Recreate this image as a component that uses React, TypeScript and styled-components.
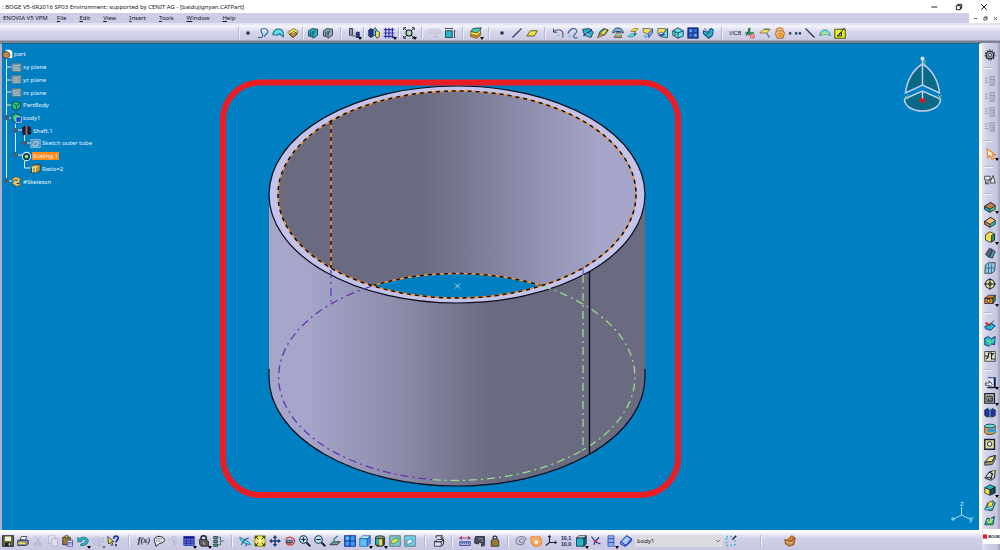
import React from "react";
import styled, { createGlobalStyle } from "styled-components";

const GlobalStyle = createGlobalStyle`
  * { box-sizing: border-box; }
  body { margin: 0; font-family: "Noto Sans", "Open Sans", sans-serif; font-size: 6px; color: #15152a; }
  button, select { font: inherit; color: inherit; border: 0; background: none; padding: 0; margin: 0; }
  svg { display: block; }
`;

const Page = styled.div`
  display: flex;
  flex-direction: column;
  min-height: 100vh;
  background: #cdcde6;
`;

const TitleBar = styled.header`
  display: flex;
  justify-content: space-between;
  align-items: center;
  height: 13px;
  padding: 0 12px 0 2px;
  background: #fff;
`;

const Title = styled.h1`
  margin: 0;
  font-size: 6px;
  line-height: 12px;
  font-weight: 400;
  white-space: nowrap;
`;

const WindowButtons = styled.div<{ $gap: number }>`
  display: flex;
  align-items: center;
  gap: ${(p) => p.$gap}px;
`;

const WindowButton = styled.button<{ $size: number }>`
  width: ${(p) => p.$size}px;
  height: ${(p) => p.$size}px;
  svg { width: 100%; height: 100%; }
`;

const MenuBar = styled.nav`
  display: flex;
  justify-content: space-between;
  height: 10px;
  background: #cdcde6;
`;

const MenuList = styled.div`
  display: flex;
  gap: 13px;
  padding-left: 3px;
`;

const MenuButton = styled.button`
  line-height: 10px;
  white-space: nowrap;
  &:first-child { margin-right: -4px; }
`;

const DocumentButtons = styled.div`
  display: flex;
  align-items: center;
  padding: 0 2px 0 4px;
  background: #fff;
`;

const ToolStrip = styled.div`
  display: flex;
  align-items: center;
  height: 20px;
  padding: 0 0 1px 236px;
  background: linear-gradient(#dedeee 0, #f4f4fb 3px, #d6d6eb 9px, #cacae3 17px, #7e8296 18px, #7e8296 20px);
`;

const BottomStrip = styled.div`
  display: flex;
  align-items: center;
  flex: none;
  height: 20px;
  padding-top: 2px;
  background: linear-gradient(#fff 0, #fff 2px, #e6e6f3 5px, #cfcfe7 9px, #c8c8e2 20px);
`;

const ToolButton = styled.button<{ $faded?: boolean }>`
  position: relative;
  display: flex;
  align-items: center;
  justify-content: center;
  width: 15px;
  height: 15px;
  opacity: ${(p) => (p.$faded ? 0.4 : 1)};
  svg { width: 12px; height: 12px; }
`;

const MenuMark = styled.span`
  position: absolute;
  right: -1px;
  bottom: 0;
  border: 2px solid transparent;
  border-top: 3px solid #000;
  border-bottom: 0;
`;

const Divider = styled.span<{ $width: number; $vertical?: boolean }>`
  flex: none;
  display: flex;
  justify-content: center;
  width: ${(p) => (p.$vertical ? 12 : p.$width)}px;
  height: ${(p) => (p.$vertical ? p.$width : 13)}px;
  align-items: center;
  &::before {
    content: "";
    width: ${(p) => (p.$vertical ? "10px" : "1px")};
    height: ${(p) => (p.$vertical ? "1px" : "12px")};
    background: #b5b5cd;
    box-shadow: ${(p) => (p.$vertical ? "0 1px #f3f3fb" : "1px 0 #f3f3fb")};
  }
`;

const SelectBox = styled.div`
  display: grid;
  align-items: center;
  width: 88px;
  margin-left: 2px;
  svg { grid-area: 1 / 1; justify-self: end; width: 6px; height: 6px; margin-right: 2px; pointer-events: none; }
`;

const BodySelect = styled.select`
  grid-area: 1 / 1;
  appearance: none;
  width: 100%;
  height: 12px;
  padding: 0 2px;
  background: #dcdce0;
`;

const Workspace = styled.main`
  flex: 1;
  display: flex;
`;

const MainColumn = styled.div`
  flex: 1;
  min-width: 0;
  display: flex;
  flex-direction: column;
`;

const Canvas = styled.section`
  flex: 1;
  display: grid;
  grid-template: minmax(0, 1fr) / minmax(0, 1fr);
  background: #0080c2;
  border-left: 2px solid #aeb2c8;
  border-right: 3px solid #fff;
  border-top: 1px solid #0c6d9d;
`;

const Scene = styled.svg`
  grid-area: 1 / 1;
  width: 100%;
  height: 100%;
`;

const Tree = styled.ul`
  grid-area: 1 / 1;
  align-self: start;
  justify-self: start;
  display: grid;
  grid-template-rows: repeat(11, 1fr);
  height: 140px;
  margin: 4px 0 0 0;
  padding: 0;
  list-style: none;
  color: #e8f4ff;
  z-index: 1;
`;

const TreeItem = styled.li<{ $depth: number }>`
  display: flex;
  align-items: center;
  padding-left: ${(p) => [0, 9, 19, 28][p.$depth]}px;
  line-height: 8px;
  white-space: nowrap;
  svg { width: 11px; height: 11px; flex: none; }
`;

const TreeLabel = styled.span<{ $selected?: boolean }>`
  padding: 0 1px;
  background: ${(p) => (p.$selected ? "#ff8a1c" : "transparent")};
`;

const TreeLines = styled.svg`
  grid-area: 1 / 1;
  align-self: start;
  justify-self: start;
  width: 60px;
  height: 150px;
  z-index: 1;
`;

const SideRail = styled.aside`
  flex: none;
  display: flex;
  flex-direction: column;
  width: 18px;
  background: linear-gradient(90deg, #e3e3f1, #cfcfe7 6px, #c6c6e0 15px, #a6a8bd 17px);
`;

const RailTools = styled.div`
  flex: 1;
  display: flex;
  flex-direction: column;
  padding: 4px 2px 0 0;
  ${ToolButton} { flex: 1 1 0; height: auto; min-height: 12px; width: 16px; }
`;

const Brand = styled.div`
  display: flex;
  align-items: center;
  gap: 1px;
  height: 15px;
  margin: 0 0 6px 1px;
  background: #fff;
  font: 900 4px "Liberation Sans", sans-serif;
  svg { width: 5px; height: 5px; }
`;

const K = "#182034";
const T = "#20b8c4";
const C = "#62e0e8";
const Y = "#f4e04a";
const N = "#23369c";
const O = "#e8842a";
const W = "#f4f4fa";
const G = "#25955a";

const box = (front: string, top: string, side: string) => (
  <>
    <path d="M2 6l4-4h8l-4 4z" fill={top} stroke={K} />
    <path d="M2 6h8v8H2z" fill={front} stroke={K} />
    <path d="M10 6l4-4v8l-4 4z" fill={side} stroke={K} />
  </>
);

const slab = (top: string, mid: string, low: string) => (
  <>
    <path d="M1 7l8-5 6 4v5l-7 4-7-4z" fill={low} stroke={K} />
    <path d="M1 7l7 4v4l-7-4z" fill={mid} stroke={K} />
    <path d="M1 7l8-5 6 4-7 5z" fill={top} stroke={K} />
  </>
);

const icons: Record<string, React.ReactNode> = {
  point: <rect x="6" y="6" width="4" height="4" fill="#14285c" />,
  spline: <path d="M1 14c5 1 8-1 6-5S4 2 9 2s7 4 4 7-3 2-3 4" stroke="#2f6f9e" strokeWidth="1.6" />,
  dome: <path d="M1 10C3 1 13 0 15 8v5l-5-4-3 2z" fill={C} stroke="#176c80" strokeWidth="1.4" />,
  patch: <><path d="M1 7l8-5 6 4-7 8z" fill={Y} stroke="#6d5a20" /><path d="M3 10l6-4 5 3-6 5z" fill="#c8901e" stroke={K} /><path d="M6 6l3 2 3-3" stroke={W} /></>,
  bodyTeal: <><path d="M2 5l5-3 7 1v8l-6 4-2-2-4-1z" fill={T} stroke={K} /><path d="M5 6v6M8 5v8M11 5l-3 4" stroke={K} /></>,
  bodyGray: <><path d="M2 5l5-3 7 1v8l-6 4-2-2-4-1z" fill="#8ba9b4" stroke={K} /><path d="M5 6v6M8 5v8M11 5l-3 4" stroke={K} /></>,
  columns: <><path d="M2 2h4v9H2z" fill="#8898bb" stroke={K} /><path d="M6 12h4M11 7h4v7h-4z" fill={N} stroke={K} /><path d="M8 3v8" stroke="#8a8aa8" strokeDasharray="1 1" /></>,
  mirrorBlocks: <><path d="M1 4l3-2 3 2v8l-3 2-3-2z" fill={N} stroke={K} /><path d="M7 3l3-2 1 2v6l-2 3-2-2z" fill={C} stroke={K} /><path d="M10 5h3l2 2v6l-3 2-2-3z" fill={Y} stroke={K} /></>,
  grid: <path d="M1 3.500h14M1 8h14M1 12.500h14M3.500 1v14M8 1v14M12.500 1v14" stroke="#3434b0" strokeWidth="1.6" />,
  snap: <><circle cx="8" cy="8" r="4" fill="#b6dcb0" stroke={K} strokeWidth="1.5" /><path d="M1 4V1h3M12 1h3v3M15 12v3h-3M4 15H1v-3M2 2l3 3M14 2l-3 3M2 14l3-3M14 14l-3-3" stroke={K} strokeWidth="1.3" /></>,
  ghost: <path d="M1 3h14v5h-5v6H7V8H1zM3 5h10" stroke="#707088" strokeDasharray="2 1" />,
  measureBox: <><path d="M2 5h9v9H2z" fill={T} stroke={K} /><path d="M2 2h9M2 1v2M11 1v2M14 5v9M13 5h2M13 14h2" stroke={K} /></>,
  layers: <><path d="M1 6l3-4 11-1-2 4-4 3z" fill="#48c8b8" stroke={K} /><path d="M1 6l8 2 5-4v4l-5 4-8-2z" fill={Y} stroke="#6d5a20" /><path d="M1 10l8 2 5-4v3l-5 4-8-2z" fill={O} stroke="#6d5a20" /></>,
  line: <path d="M2 14L14 2" stroke="#2b3566" strokeWidth="1.5" />,
  plane: <path d="M1 12l5-7h9l-4 7z" fill={Y} stroke="#66601e" strokeWidth="1.3" />,
  arcOpen: <><path d="M14 14C17 5 10 1 2 6" stroke="#4c5d80" strokeWidth="1.5" /><path d="M2 2v5h5" stroke={K} /><path d="M7 11h3" stroke={T} /></>,
  loop: <><path d="M1 9c4-9 11-8 12-4s-5 4-4 8c1 3 5 1 5 1" stroke="#365d9a" strokeWidth="1.5" /><path d="M1 12h5" stroke={T} /></>,
  trim: <><path d="M1 3l9-1 5 5-3 7-6-2-4-4z" fill={T} stroke={K} /><path d="M2 12c4-6 8-3 11-9" stroke={N} strokeWidth="2" /><path d="M5 8l5 4" stroke={W} /></>,
  join: <><path d="M1 14l3-8 5-4 6 2-4 6z" fill={T} stroke={K} /><path d="M4 9l5-5 5-1-4 7z" fill={Y} stroke="#7b6520" /><path d="M2 13l5-3" stroke={O} strokeWidth="2" /></>,
  revolve: <><path d="M1 8c0-9 14-9 14 0l-4-2H5z" fill="#7eb7dc" stroke={K} /><path d="M6 7h5l2 7H3z" fill={O} stroke="#34557a" /><path d="M4 10h8" stroke={C} strokeWidth="2" /></>,
  offset: <><path d="M1 13h7l5-4H6z" fill={C} stroke="#2a8a8a" /><path d="M5 6h6l4-4H9z" fill={Y} stroke="#8a7a2a" /><path d="M10 12l1-7" stroke={K} /></>,
  sweep: <><path d="M1 2h10l3 3-5 5-7-3z" fill={Y} stroke="#4b5978" /><path d="M8 9l6-7v6l-5 6z" fill="#78a8e0" stroke={N} /><path d="M2 11l6 1-3 3z" fill={T} /></>,
  extend: <><path d="M1 2h10v7l-5-2-5 2z" fill={Y} stroke="#4b5978" /><path d="M5 13l9-11v12z" fill={C} stroke={K} /><path d="M2 11l8-1" stroke={N} strokeWidth="2" /></>,
  cubeWire: <><path d="M1 5l7-4 7 4v7l-7 3-7-4z" fill={C} stroke={K} /><path d="M1 5l7 3 7-3M8 8v7M4 7v5" stroke="#175b7a" strokeWidth="1.4" /></>,
  windows: <><path d="M1 1h14v14H1z" fill={N} stroke="#172b68" /><path d="M3 3h4v4H3zM9 9h4v4H9z" fill="#58a8ee" /><path d="M9 3h4v4H9zM3 9h4v4H3z" fill="#2f7ad0" /></>,
  heart: <><path d="M2 5l5 2 5-5 3 2-1 7-5 4-7-6z" fill={T} stroke="#174d8a" strokeWidth="1.4" /><path d="M3 2l3 2M6 10l5-4" stroke={K} /></>,
  exchange: <><path d="M7 1v10M2 8h11" stroke={G} strokeWidth="3" /><path d="M3 12l4-9" stroke={K} /><circle cx="11" cy="12" r="3" fill="#f0b8c0" stroke="#d83a4a" /><path d="M9 10l4 4" stroke="#d83a4a" /></>,
  brush: <><path d="M1 8l5-5h9l-5 5z" fill={Y} stroke="#667048" /><path d="M10 8l4 6M7 3h7" stroke="#4c6c74" strokeWidth="1.600" /></>,
  orangeBox: <><path d="M3 5h9l2 3-2 7H4L2 9z" fill="#efc06a" stroke="#8a5620" /><path d="M3 5c0-5 9-5 9 0M5 9h7M6 12h6" stroke={O} strokeWidth="2" /></>,
  dots: <><rect x="0" y="7" width="3" height="3" fill="#17306a" /><rect x="8" y="7" width="3" height="3" fill="#17306a" /><rect x="13" y="7" width="3" height="3" fill="#17306a" /></>,
  diagonal: <path d="M2 2l12 12" stroke="#2b2b4c" strokeWidth="1.6" />,
  rainbow: <><path d="M1 12C2 1 14 1 15 12c-3-3-11-3-14 0z" fill={C} stroke="#1f8a7a" /><path d="M4 10c3-3 5-3 8 0" stroke={Y} strokeWidth="2" /></>,
  sketchYellow: <><path d="M1 3h14v12H1z" fill="#e8ee28" stroke="#555c14" strokeWidth="1.400" /><path d="M4 12h6V7zM7 10l7-9" stroke={K} strokeWidth="1.3" /></>,
  save: <><path d="M1 1h14v14H1z" fill="#78782a" stroke={K} strokeWidth="1.5" /><path d="M4 2h8v6H4z" fill="#eceee2" /><path d="M4 10h8v5H4z" fill={K} /><path d="M9 11h2v3H9z" fill={W} /></>,
  print: <><path d="M4 6l2-4h7l-2 5z" fill={W} stroke={K} /><path d="M1 7h14v5l-3 2H1z" fill="#8e8e8e" stroke={K} /><path d="M2 11h9" stroke={Y} strokeWidth="2" /></>,
  cut: <path d="M4 1l6 10M12 1L5 11M3 11h3v3H3zM9 11h3v3H9z" stroke="#777790" />,
  copy: <><path d="M2 1h8v10H2z" fill={W} stroke="#777790" /><path d="M6 5h8v10H6z" fill={W} stroke="#777790" /></>,
  paste: <><path d="M1 3h10v10H1z" fill="#a47a28" stroke={K} /><path d="M4 1h4v3H4z" fill={Y} stroke={K} /><path d="M7 7h7v8H7z" fill={W} stroke={N} /><path d="M8 10h5M8 12h5" stroke={N} /></>,
  undo: <path d="M1 3v6h6L5 7c4-2 7-1 6 2-1 2-4 3-6 3v2c5 1 10-2 10-6 0-5-7-7-12-3z" fill={T} stroke="#186c74" />,
  redo: <path d="M15 3v6H9l2-2C7 5 4 6 5 9c1 2 4 3 6 3v2C6 15 1 12 1 8c0-5 7-7 12-3z" stroke="#8686a0" />,
  help: <><path d="M1 2l1 10 2-2 2 4 2-1-2-4h3z" fill={Y} stroke={K} /><path d="M9 5c0-5 6-4 6-1 0 3-3 2-3 6M12 12v3" stroke={N} strokeWidth="2.400" /></>,
  comment: <><path d="M3 11C-1 4 5 1 10 2c7 1 7 9-1 9l-5 4z" fill={W} stroke={K} strokeWidth="1.300" /><path d="M4 5h8M4 8h7" stroke={K} strokeDasharray="2 1" /></>,
  key: <><circle cx="8" cy="5" r="3" stroke="#777790" /><path d="M8 8v6M8 12h3" stroke="#777790" /></>,
  table: <><path d="M1 2h14v12H1z" fill="#5c7ce0" stroke={N} /><path d="M1 2h14v3H1z" fill="#1c1c88" /><path d="M1 8h14M1 11h14M5 5v9M10 5v9" stroke="#1c1c88" /></>,
  lock: <><path d="M4 7V4c0-4 7-4 7 0v3" stroke={K} strokeWidth="2" /><path d="M2 6h10l2 3v6H4l-2-3z" fill="#5c5c54" stroke={K} /><path d="M6 9l3 4" stroke={W} /></>,
  relation: <><path d="M1 2h5v3H1zM1 7h5v3H1zM1 12h5v3H1z" fill="#64a890" stroke={K} /><path d="M7 3h3v10H7M10 8h5" stroke="#4c8474" strokeWidth="1.500" /></>,
  fly: <><path d="M1 3l6 3 7 4 1 3-8-2-5-4z" fill={C} stroke="#1c6c9c" /><path d="M3 13l5-7 5-2M10 12l-1 3" stroke="#1c4c8c" strokeWidth="1.400" /></>,
  fitAll: <><path d="M1 1h14v14H1z" fill={Y} stroke="#7d8a24" /><path d="M2 2l4 4M14 2l-4 4M2 14l4-4M14 14l-4-4M2 5V2h3M11 2h3v3M14 11v3h-3M5 14H2v-3" stroke="#174d2a" strokeWidth="1.300" /><path d="M6 6h4v4H6z" fill={W} /></>,
  pan: <path d="M8 0l3 4H9v3h3V5l4 3-4 3V9H9v3h2l-3 4-3-4h2V9H4v2L0 8l4-3v2h3V4H5z" fill="#243a7c" />,
  rotate: <><path d="M2 6c4-6 13-2 12 3-2 6-10 5-11 1l7 1" stroke="#c0463e" strokeWidth="1.700" /><path d="M3 7h8v3H3z" fill="#8ba0c8" stroke={K} /></>,
  zoomIn: <><circle cx="6" cy="6" r="5" fill="#c4ecf2" stroke="#1c3464" strokeWidth="1.500" /><path d="M10 10l5 5" stroke={K} strokeWidth="2.600" /><path d="M3 6h6M6 3v6" stroke={K} strokeWidth="1.600" /></>,
  zoomOut: <><circle cx="6" cy="6" r="5" fill="#c4ecf2" stroke="#1c3464" strokeWidth="1.500" /><path d="M10 10l5 5" stroke={K} strokeWidth="2.600" /><path d="M3 6h6" stroke={K} strokeWidth="1.600" /></>,
  normal: <><path d="M1 13l4-4h10l-4 4z" fill="#6ca08c" stroke={K} /><path d="M7 10V5l5-4" stroke="#3c8c8c" strokeWidth="2" /></>,
  multi: <><path d="M1 1h14v14H1z" fill="#38a0f0" stroke="#1c2c9c" strokeWidth="1.500" /><path d="M8 1v14M1 8h14" stroke="#1c2c9c" strokeWidth="1.500" /><path d="M3 3h3v3H3z" fill={C} /></>,
  iso: <><path d="M1 5l4-4h10l-4 4z" fill="#b4f4fc" stroke="#1c58a8" /><path d="M1 5h10v10H1z" fill="#5cc4fa" stroke="#1c58a8" /><path d="M11 5l4-4v10l-4 4z" fill="#3c8ce0" stroke="#1c58a8" /></>,
  shade: <><path d="M2 3h12v10l-3 2H4l-2-2z" fill="#3c4420" stroke={K} /><path d="M3 4h4v9H3z" fill={T} /><path d="M7 4h4v10H7z" fill={Y} /><ellipse cx="8" cy="3" rx="6" ry="2" fill="#7ca078" stroke={K} /></>,
  hide: <><path d="M1 1h14v14H1z" fill="#7cc8cc" stroke="#555c70" /><path d="M3 8l4-3 6-1-3 6-6 2z" fill={Y} stroke={G} /></>,
  swap: <><path d="M1 1h14v14H1z" fill="#70d4ec" stroke="#555c70" /><path d="M4 7l7-2v5l-7 3z" fill={W} stroke="#2874b0" /></>,
  render: <><path d="M2 9l4-3h8l-3 3zM2 9h9v6H2z" fill="#e0e0e8" stroke={K} /><path d="M11 9l3-3v6l-3 3M4 4V1h8M12 0v5M10 3l2 2 2-2" stroke={K} strokeWidth="1.200" /></>,
  ruler: <><path d="M1 9h14v5H1z" fill="#b0b4d8" stroke={N} /><path d="M4 9v3M7 9v3M10 9v3M13 9v3" stroke={N} /><path d="M1 4h14M4 2L1 4l3 2M12 2l3 2-3 2" stroke="#a8447c" strokeWidth="1.400" /></>,
  caliper: <><path d="M2 2h12v12l-4 1v-5H6v2l-5-1V5z" fill="#4c4c5c" stroke={K} /><path d="M6 5h6M9 8h3" stroke="#a8a8b8" /></>,
  weight: <><path d="M6 5c-3-5 7-5 4 0" stroke={K} strokeWidth="1.500" /><path d="M5 5h6l2 3v7H3V8z" fill="#967a28" stroke={K} /></>,
  swirl: <path d="M10 9c-5 3-6-4-1-4 6 0 4 8-2 8C-1 12 0 3 8 2c4 0 7 2 7 5" stroke="#83839a" strokeWidth="1.500" />,
  hand: <><path d="M1 3l3-1 4 1 4-1 3 5v5l-4 3H6l-4-4z" fill="#fbb070" stroke={O} strokeWidth="1.500" /><path d="M5 8c2-3 7-2 7 1s-4 5-6 3z" fill="#fff0e0" stroke={O} /></>,
  axes: <path d="M6 1v9h9M6 10l-5 4M4 3l2-2 2 2M13 8l2 2-2 2" stroke={K} strokeWidth="1.400" />,
  part: <><path d="M2 4l3-3h10l-3 3z" fill={W} stroke={K} /><path d="M2 4h10v11H2z" fill={T} stroke={K} /><path d="M12 4l3-3v11l-3 3z" fill="#1a6c7c" stroke={K} /></>,
  molecule: <><path d="M2 2l5 7 7 3M7 9l5-6M7 9l-2 4" stroke={N} strokeWidth="1.600" /><circle cx="7" cy="8" r="2" fill="#d42c58" /></>,
  stack: <><path d="M4 1h8v14H4z" fill="#8cacf0" stroke="#3454b0" /><path d="M4 5h8M4 10h8" stroke={N} /></>,
  sheet: <><path d="M1 9l8-8 6 4-7 9z" fill="#a8ccfa" stroke="#2444c0" strokeWidth="1.400" /><path d="M1 9v3l6 3 8-7V5" stroke="#2444c0" strokeWidth="1.400" /></>,
  select: <><path d="M2 4v10h10" stroke={T} strokeDasharray="2 3" strokeWidth="2" /><path d="M2 2h7M13 7v7" stroke={T} strokeDasharray="2 3" strokeWidth="2" /><path d="M10 6l5-5" stroke={K} strokeWidth="2" /></>,
  basket: <><path d="M1 6l7 2 7-4-2 9-6 2-5-3z" fill="#c88a3c" stroke="#6c3c14" /><path d="M5 6l5-5 4 2-6 6z" fill={O} stroke="#6c3c14" /><path d="M3 9l8 2" stroke="#f4d49a" /></>,
  gear: <><circle cx="8" cy="8" r="5" fill="#96a89c" stroke={K} strokeWidth="1.600" /><circle cx="8" cy="8" r="6.500" stroke="#3c4c48" strokeWidth="1.600" strokeDasharray="2 1.600" /><circle cx="8" cy="8" r="2" fill={W} stroke={K} /></>,
  tiles: <><path d="M8 2h6v12H8z" fill="#a8a8b4" stroke="#50505c" /><path d="M1 4h5M1 7h4M1 10h5M8 6h6M10 9h3M10 12h3" stroke="#50505c" strokeWidth="1.200" /></>,
  pointer: <path d="M4 1l1 12 3-3 3 5 2-1-2-5h4z" fill="#fff0e0" stroke={O} strokeWidth="1.500" />,
  sketcher: <><path d="M1 3h7v5H1zM8 12l4-10 3 10z" fill="#f0f0f4" stroke="#44444c" strokeWidth="1.300" /><path d="M2 13l8-7M2 9v4h5" stroke="#44444c" strokeWidth="1.300" /></>,
  pad: slab("#c87c48", T, "#4cc47c"),
  pocket: slab("#f4c070", O, T),
  prism: <><path d="M2 5l6-4 6 3v8l-6 3-6-3z" fill={Y} stroke={K} /><path d="M10 6l4-2v8l-4 3z" fill={G} stroke={K} /></>,
  rib: <><path d="M2 10l5-8 4 1-4 11z" fill="#5c6478" stroke={K} /><path d="M7 13l5-9 3 2-4 9z" fill="#4c94a4" stroke={K} /></>,
  bluegrid: <><path d="M2 4l4-3h9l-1 11-4 3H1z" fill="#90ccd4" stroke={K} /><path d="M2 8h12M6 2v13M10 3v12" stroke="#24589c" /></>,
  target: <><circle cx="8" cy="8" r="6" fill="#e8dc9c" stroke={K} strokeWidth="1.500" /><circle cx="8" cy="8" r="2" stroke={K} /><path d="M8 0v16M0 8h16" stroke={K} strokeWidth="1.200" /></>,
  thick: <><path d="M1 7l5-4h9l-3 4zM1 7h11v7H1z" fill={O} stroke={K} /><path d="M12 7l3-4v7l-3 4z" fill={G} stroke={K} /><circle cx="6" cy="10.500" r="2" fill={Y} stroke={K} /></>,
  split: <><path d="M1 10l9-4 5 3-6 6-7-2z" fill={T} stroke={N} strokeWidth="1.300" /><path d="M2 5l5 3" stroke="#d83a2a" strokeWidth="3" /><path d="M7 9l6-7" stroke={K} /></>,
  surface: <><path d="M1 4l5-2 3 3 6-3-1 11-4-1-3 3-6-2z" fill={T} stroke={N} strokeWidth="1.300" /><path d="M3 6l5 5M8 5v9M10 9l4-2" stroke="#6ce47c" strokeWidth="1.500" /></>,
  assemble: <><path d="M1 2h14v13H1z" fill="#ece4c0" stroke={K} /><path d="M1 8h5V4h4v8h5M3 12l3-3M13 4l-3 3" stroke={K} strokeWidth="1.500" /></>,
  draft: <><path d="M5 1h10v13H4" fill="#e4e8f4" stroke={N} strokeWidth="1.500" /><path d="M14 1v13H5" stroke={K} strokeWidth="2" /><path d="M2 8h5V5l4 5-4 4v-3H2z" fill={W} stroke={K} /></>,
  frame: <><path d="M1 2h13v13H1z" fill="#989c90" stroke={K} strokeWidth="1.500" /><path d="M4 6h7v6H4z" fill="#e8dc9c" stroke={K} /><path d="M6 8h5v4H6z" fill="#8c8c94" stroke={K} /></>,
  mirror: <><path d="M1 4l4-2 2 2v9H3l-2-2zM15 4l-4-2-2 2v9h4l2-2z" fill={N} stroke={K} /><path d="M8 1v14" stroke={T} /></>,
  cylinder: <><path d="M1 4v9c2 3 11 3 14 0V4z" fill="#f0a040" stroke={K} /><ellipse cx="8" cy="4" rx="7" ry="2.500" fill={C} stroke={K} /><path d="M5 8h10v4H5z" fill="#4c8cd0" stroke={T} /></>,
  hole: <><path d="M1 2h13v13H1z" fill="#e8dc9c" stroke={K} strokeWidth="1.800" /><circle cx="7.500" cy="8" r="3" fill={W} stroke={K} strokeWidth="1.300" /></>,
  wedge: <><path d="M1 11l6-7 8-2-4 8z" fill="#ece48c" stroke={K} strokeWidth="1.300" /><path d="M1 11l10-1 4-8v5l-4 7-10 1z" fill="#a89c5c" stroke={K} /></>,
  ribs: <><path d="M1 12l6-8 8-2-1 10-5 3z" fill="#d8d8cc" stroke={K} strokeWidth="1.300" /><path d="M3 11l7 1M7 4l5 3M11 7l-2 7" stroke={K} strokeWidth="1.500" /><path d="M11 3l3-1-1 4z" fill={Y} /></>,
  rgbCube: <><path d="M1 5l7-4 7 3-7 4z" fill={T} stroke={K} /><path d="M1 5l7 3v7l-7-3z" fill={Y} stroke={K} /><path d="M8 8l7-4v8l-7 3z" fill="#144c50" stroke={K} /></>,
  leafA: <><path d="M1 13l4-9 7-3 3 3-4 10z" fill={T} stroke={K} /><path d="M6 3l6-1-1 6-6 2z" fill={Y} stroke="#7c7020" /><path d="M2 13l10-4" stroke={W} /></>,
  leafB: <><path d="M1 13l3-9 4 1 6-3-2 11z" fill={T} stroke={K} /><path d="M4 6l3 5 5-6M9 4v7" stroke={Y} strokeWidth="1.500" /><path d="M2 12h10" stroke={G} strokeWidth="2" /></>,
};

const Icon = ({ name }: { name: string }) => {
  if (name === "vicb" || name === "fx" || name === "dims") {
    const lines = { vicb: ["VICB"], fx: ["f(x)"], dims: ["10,1", "10,0"] }[name];
    return (
      <svg viewBox="0 0 16 16" overflow="visible" aria-hidden="true">
        {lines.map((t, i) => (
          <text
            key={t}
            x="8"
            y={lines.length === 2 ? 7 + i * 8 : 11}
            textAnchor="middle"
            fontFamily={name === "fx" ? "Liberation Serif, serif" : "Liberation Sans, sans-serif"}
            fontStyle={name === "fx" ? "italic" : "normal"}
            fontWeight={name === "vicb" ? 400 : 700}
            fontSize={name === "fx" ? 11 : name === "vicb" ? 7 : 7}
            fill={name === "dims" ? "#1c2460" : K}
          >
            {t}
          </text>
        ))}
      </svg>
    );
  }
  return (
    <svg viewBox="0 0 16 16" fill="none" aria-hidden="true">
      {icons[name]}
    </svg>
  );
};

/* Tool lists: "*" marks a drop-down, "~" a disabled tool, a number is a divider and its width. */
type Item = string | number;

const topTools: Item[] = [
  "point", "spline", "dome", "patch", 5, "bodyTeal", "bodyGray", 11, "columns*", 5, "mirrorBlocks", "grid*", 5,
  "snap*", 11, "ghost~", "measureBox", 11, "layers*", 11, "point", "line", "plane", 11,
  "arcOpen", "loop", "trim", "join", "revolve", "offset", "sweep", "extend", "cubeWire", "windows", "heart", 12,
  "vicb", "exchange", "brush", "orangeBox", "dots", "diagonal", "rainbow", "sketchYellow",
];

const bottomTools: Item[] = [
  "save", "print", "cut~", "copy~", "paste", "undo*", "redo*~", "help", 16,
  "fx", "comment", "key~", "table*", "lock*", "relation", 11,
  "fly", "fitAll", "pan", "rotate", "zoomIn", "zoomOut", "normal", "multi", "iso*", "shade*", "hide", "swap", 14,
  "render", 11, "ruler", "caliper", "weight", 11,
  "swirl", "hand", "axes", "dims", "part*", "molecule", "stack*", "sheet",
];

const railTools: Item[] = [
  "gear", 11, "tiles~", "tiles~", "tiles~", "tiles~", 11, "pointer*", 11, "sketcher", 11,
  "pad*", "pocket", "prism*", "rib", "bluegrid", "target", "thick*", 11, "split", "surface", "assemble", 11,
  "draft*", "frame*", "mirror", "cylinder", "hole", "wedge", "ribs", "rgbCube*", "leafA", "leafB",
];

const Tools = ({ items, vertical }: { items: Item[]; vertical?: boolean }) => (
  <>
    {items.map((item, i) => {
      if (typeof item === "number") return <Divider key={i} $width={item} $vertical={vertical} />;
      const name = item.replace(/[*~]/g, "");
      return (
        <ToolButton key={i} type="button" aria-label={name} $faded={item.includes("~")}>
          <Icon name={name} />
          {item.includes("*") && <MenuMark />}
        </ToolButton>
      );
    })}
  </>
);

const treeIcons: Record<string, React.ReactNode> = {
  part: <><path d="M5 1h7l3 3v9H5z" fill="#fff" /><path d="M1 6l5-3 5 3v5l-5 3-5-3z" fill="#b88a50" stroke={K} /></>,
  plane: <><path d="M1 2h14v12H1z" fill="#7c98a4" stroke="#566e7a" /><path d="M3 9h9M3 6h6l4-2M4 12h9" stroke="#c4d4d8" /></>,
  body: <><path d="M1 5l6-3 7 3-1 7-6 3-5-3z" fill="#24c480" stroke="#0c3c34" strokeWidth="1.400" /><path d="M4 6l4 2 4-2M8 8v5" stroke="#0c3c34" /></>,
  bodyActive: <><path d="M1 5l6-3 7 3-1 7-6 3-5-3z" fill="#24c480" stroke="#0c3c34" strokeWidth="1.400" /><path d="M7 7h8v8H7z" fill="#1c48c8" stroke="#dceaff" /></>,
  shaft: <><path d="M2 4l4-2v12H3zM10 2l4 2v9h-4z" fill="#22222e" stroke="#101018" /><path d="M8 1v14" stroke="#e44c3c" strokeWidth="2" /></>,
  sketch: <><path d="M1 2h14v12H1z" fill="#5c94c0" stroke="#a0c4dc" /><path d="M4 11l3-6 5 1-2 6z" stroke="#e4f0fa" /></>,
  scaling: <><circle cx="8" cy="8" r="6" fill="#123c5c" stroke="#e4f0fa" strokeWidth="1.500" /><circle cx="8" cy="8" r="2.500" fill="#9ce47c" /></>,
  ratio: <><path d="M2 5l4-3h9v9l-4 3H2z" fill="#b49438" stroke={K} /><path d="M4 6v8M8 5v9M2 6h9" stroke="#f4e8a8" strokeWidth="1.400" /></>,
  skeleton: <><path d="M2 4l5-3 7 3-2 5 2 4-6 2-6-4 2-3z" fill="#e8c86c" stroke="#74541c" /><path d="M5 6h5M8 11h4" stroke={K} strokeWidth="1.300" /></>,
};

const tree = [
  { icon: "part", label: "part", depth: 0 },
  { icon: "plane", label: "xy plane", depth: 1 },
  { icon: "plane", label: "yz plane", depth: 1 },
  { icon: "plane", label: "zx plane", depth: 1 },
  { icon: "body", label: "PartBody", depth: 1 },
  { icon: "bodyActive", label: "body1", depth: 1 },
  { icon: "shaft", label: "Shaft.1", depth: 2 },
  { icon: "sketch", label: "Sketch outer tube", depth: 3 },
  { icon: "scaling", label: "Scaling.1", depth: 2, selected: true },
  { icon: "ratio", label: "Ratio=2", depth: 3 },
  { icon: "skeleton", label: "#Skeleton", depth: 1 },
];

const Minimize = () => <svg viewBox="0 0 12 12" stroke="#222" fill="none"><path d="M2 6h9" strokeWidth="1.500" /></svg>;
const Restore = () => <svg viewBox="0 0 12 12" stroke="#222" fill="none"><path d="M2 4h6v6H2zM4 4V2h6v6H8" strokeWidth="1.500" /></svg>;
const Close = () => <svg viewBox="0 0 12 12" stroke="#222" fill="none"><path d="M2 2l8 8M10 2l-8 8" strokeWidth="1.500" /></svg>;

const WindowControls = ({ size, gap }: { size: number; gap: number }) => (
  <WindowButtons $gap={gap}>
    <WindowButton $size={size} aria-label="Minimize"><Minimize /></WindowButton>
    <WindowButton $size={size} aria-label="Restore"><Restore /></WindowButton>
    <WindowButton $size={size} aria-label="Close"><Close /></WindowButton>
  </WindowButtons>
);

const Model = () => (
  <Scene viewBox="2 44 977 486" fill="none" role="img" aria-label="Scaled tube model">
    <defs>
      <linearGradient id="outer" gradientUnits="userSpaceOnUse" x1="269" y1="0" x2="645" y2="0">
        <stop offset="0" stopColor="#a6a6cb" />
        <stop offset="0.1" stopColor="#a6a6cb" />
        <stop offset="0.35" stopColor="#8b8bab" />
        <stop offset="0.59" stopColor="#6a6a80" />
        <stop offset="1" stopColor="#6a6a80" />
      </linearGradient>
      <linearGradient id="inner" gradientUnits="userSpaceOnUse" x1="278" y1="0" x2="636" y2="0">
        <stop offset="0" stopColor="#6a6a80" />
        <stop offset="0.4" stopColor="#6a6a80" />
        <stop offset="0.66" stopColor="#8989a8" />
        <stop offset="0.9" stopColor="#a5a5ca" />
        <stop offset="1" stopColor="#a5a5ca" />
      </linearGradient>
      <clipPath id="mouth"><ellipse cx="457" cy="194.500" rx="179" ry="103.500" /></clipPath>
    </defs>

    <path d="M269 194.500V377a188 109 0 0 0 376 0V194.500z" fill="url(#outer)" />
    <path d="M269 369v8a188 109 0 0 0 376 0v-8" stroke="#0c0c18" strokeWidth="1.200" />
    <ellipse cx="457" cy="194.500" rx="188" ry="108.500" fill="#c3c3ec" stroke="#0c0c18" strokeWidth="1.200" />
    <ellipse cx="457" cy="194.500" rx="179" ry="103.500" fill="url(#inner)" />
    <g clipPath="url(#mouth)">
      <ellipse cx="457" cy="377" rx="179" ry="103.500" fill="#0080c2" stroke="#f09a3c" strokeWidth="1.500" />
      <ellipse cx="457" cy="377" rx="179" ry="103.500" stroke="#101018" strokeWidth="1.500" strokeDasharray="4 4" />
    </g>
    <ellipse cx="457" cy="194.500" rx="179" ry="103.500" stroke="#e8943c" strokeWidth="1.500" />
    <ellipse cx="457" cy="194.500" rx="179" ry="103.500" stroke="#101018" strokeWidth="1.500" strokeDasharray="4 4" />
    <path d="M331 121v147" stroke="#f0943c" strokeWidth="1.500" />
    <path d="M331 121v147" stroke="#101018" strokeWidth="1.500" strokeDasharray="4 4" />

    <g strokeWidth="1.300" strokeDasharray="8 4 2 4">
      <path d="M331 270v35" stroke="#6a3cb4" />
      <path d="M371 286.500A179 103.500 0 0 0 432 479.500" stroke="#6a30b0" />
      <path d="M543 286.500A179 103.500 0 0 1 432 479.500" stroke="#98dc8c" />
      <path d="M583 275v176" stroke="#98dc8c" />
    </g>
    <path d="M583 267v8" stroke="#6a3cb4" />
    <path d="M589.500 272v182" stroke="#0c0c18" strokeWidth="1.400" />
    <path d="M455 283.500l5 5M460 283.500l-5 5" stroke="#b8dcf0" strokeWidth="0.900" />
    <rect x="223" y="82.500" width="455" height="412.500" rx="37" stroke="#ec1c24" strokeWidth="6" />

    <g stroke="#c0ccf4" strokeWidth="1.500" fill="#086a84">
      <path d="M922.500 64c-9 5-16 17-17 29l17-8 17 8c-1-12-8-24-17-29z" />
      <path d="M904.500 99l18-8 18 8c0 16-36 16-36 0z" />
      <path d="M922.500 60v25M922.500 91v8" fill="none" />
    </g>
    <circle cx="922.500" cy="58.500" r="2" fill="#dce4fa" />
    <path d="M923 61h3l-3 3h3M905 96l3 3M908 95l-3 4M938 95l2 2 2-2M940 97v3" stroke="#8cd468" strokeWidth="0.800" />
    <rect x="920" y="98.500" width="5" height="4" fill="#e80c14" />

    <g stroke="#a8dcf4" strokeWidth="1">
      <path d="M961.500 507v8l-8 4M961.500 515l8 4" />
      <path d="M952 518h2v2h-2z" />
    </g>
    <g fill="#c4e8fa" fontFamily="Liberation Sans, sans-serif" fontSize="8">
      <text x="960" y="506">z</text>
      <text x="969" y="521">y</text>
    </g>
  </Scene>
);

export default function App() {
  return (
    <Page>
      <GlobalStyle />
      <TitleBar>
        <Title>: BOGE V5-6R2016 SP03 Environment: supported by CENIT AG - [baidujignyan.CATPart]</Title>
        <WindowControls size={8} gap={17} />
      </TitleBar>
      <MenuBar>
        <MenuList>
          <MenuButton>ENOVIA V5 VPM</MenuButton>
          {["File", "Edit", "View", "Insert", "Tools", "Window", "Help"].map((m) => (
            <MenuButton key={m}><u>{m[0]}</u>{m.slice(1)}</MenuButton>
          ))}
        </MenuList>
        <DocumentButtons><WindowControls size={5} gap={5} /></DocumentButtons>
      </MenuBar>
      <ToolStrip role="toolbar">
        <Divider $width={4} />
        <Tools items={topTools} />
      </ToolStrip>
      <Workspace>
        <MainColumn>
          <Canvas>
            <Model />
            <TreeLines viewBox="0 0 60 150" stroke="#dcecfa" fill="none" aria-hidden="true">
              <path d="M4.500 12v126M4.500 23h6M4.500 36h6M4.500 48h6M4.500 61h6M4.500 74h6M4.500 137h6M13.500 80v31M13.500 86h7M13.500 111h7M22.500 91v8h6M22.500 117v7h6" />
              <path d="M2 74h5M4.500 71v5M2 137h5M4.500 134v5M11 86h5M13.500 84v5M11 111h5M13.500 108v5M20 99h5M22.500 97v5" stroke="#4a5a68" strokeWidth="2" />
            </TreeLines>
            <Tree>
              {tree.map((n) => (
                <TreeItem key={n.label} $depth={n.depth}>
                  <svg viewBox="0 0 16 16" fill="none" aria-hidden="true">{treeIcons[n.icon]}</svg>
                  <TreeLabel $selected={n.selected}>{n.label}</TreeLabel>
                </TreeItem>
              ))}
            </Tree>
          </Canvas>
          <BottomStrip role="toolbar">
            <Tools items={bottomTools} />
            <SelectBox>
              <BodySelect aria-label="Active body" defaultValue="body1">
                <option>body1</option>
              </BodySelect>
              <svg viewBox="0 0 6 6" fill="none" stroke="#77777f" aria-hidden="true"><path d="M1 2l2 2 2-2" /></svg>
            </SelectBox>
            <Tools items={["select"]} />
            <Divider $width={44} />
            <Tools items={["basket"]} />
          </BottomStrip>
        </MainColumn>
        <SideRail>
          <RailTools><Tools items={railTools} vertical /></RailTools>
          <Brand>
            <svg viewBox="0 0 6 6" aria-hidden="true"><rect width="6" height="6" fill="#dc1c24" /></svg>
            BOGE
          </Brand>
        </SideRail>
      </Workspace>
    </Page>
  );
}
